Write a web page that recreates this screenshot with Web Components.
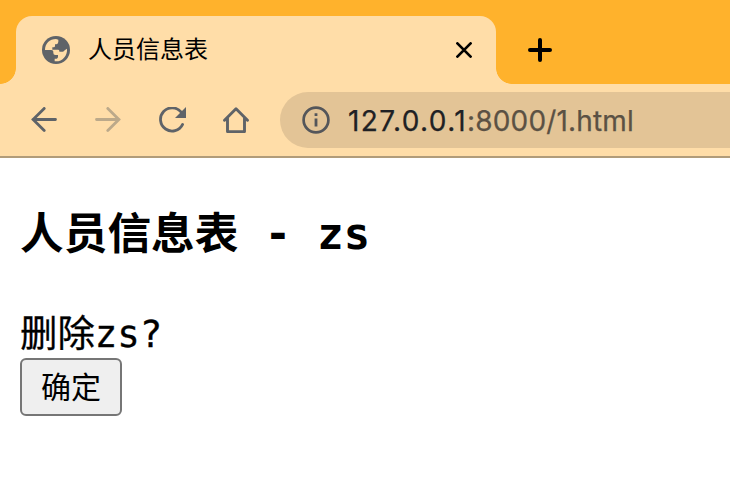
<!DOCTYPE html>
<html lang="zh-CN">
<head>
<meta charset="utf-8">
<title>人员信息表</title>
<style>
html,body{margin:0;height:100%;overflow:hidden;background:#fff}
</style>
</head>
<body>
<browser-window>
  <browser-tab slot="tabs">人员信息表</browser-tab>
  <address-bar slot="address" host="127.0.0.1" path=":8000/1.html"></address-bar>
  <confirm-page heading="人员信息表 - zs" message="删除zs?" action="确定"></confirm-page>
</browser-window>
<script>
const define = (name, html, setup) => customElements.define(name, class extends HTMLElement {
  connectedCallback() {
    if (this.shadowRoot) return;
    const root = this.attachShadow({ mode: 'open' });
    root.innerHTML = html;
    if (setup) setup(this, root);
  }
});

const icons = {
  globe: [28, 28, '0 0 84 84', '<circle cx="42" cy="42" r="42" fill="#5f6368"/><path fill="#ffdda8" d="M9 42C9 23 23 9 42 9L49 11V17Q49 24 43 25H39V30Q39 34 35 34H31V41H48Q52 41 52 45V47H62Q66 47 68 43L75 38C77 58 62 76 42 76H38V68H44Q48 67 48 62V57H40Q34 57 34 51V47Q34 42 28 42Z"/>'],
  back: [26, 26, '0 0 26 26', '<path d="M24.5 12.5H2M13.2 1.4L2.1 12.5L13.2 23.6" fill="none" stroke="#5f6368" stroke-width="2.8" stroke-linecap="round"/>'],
  forward: [26, 26, '0 0 26 26', '<path d="M1.5 12.5H24M12.8 1.4L23.9 12.5L12.8 23.6" fill="none" stroke="#bca98a" stroke-width="2.8" stroke-linecap="round"/>'],
  reload: [28, 26, '0 0 28 26', '<path d="M22.2 5.2A11.6 11.6 0 1 0 23.6 17.4" fill="none" stroke="#5f6368" stroke-width="2.8" stroke-linecap="round"/><path d="M27 0V11H16Z" fill="#5f6368"/>'],
  home: [26, 26, '0 0 26 26', '<path d="M1.5 13.2L13 1.8L24.5 13.2M4.5 11V24.6H21.5V11" fill="none" stroke="#5f6368" stroke-width="2.9" stroke-linejoin="round" stroke-linecap="round"/>'],
  info: [28, 28, '0 0 28 28', '<circle cx="14" cy="14" r="12.4" fill="none" stroke="#54565a" stroke-width="2.7"/><path d="M12.6 7.3H15.4V10H12.6ZM12.6 12.4H15.4V20.6H12.6Z" fill="#54565a"/>'],
  close: [16, 16, '0 0 16 16', '<path d="M1.4 1.4L14.6 14.6M14.6 1.4L1.4 14.6" stroke="#000" stroke-width="2.7" stroke-linecap="round"/>'],
  plus: [24, 24, '0 0 24 24', '<path d="M12 2V22M2 12H22" stroke="#000" stroke-width="4" stroke-linecap="round"/>']
};
define('ui-icon', '<style>:host{display:block;flex:none}svg{display:block}</style>', (el, root) => {
  const [w, h, box, body] = icons[el.getAttribute('name')];
  root.innerHTML += `<svg width="${w}" height="${h}" viewBox="${box}">${body}</svg>`;
});

define('browser-tab', `
<style>
:host{display:flex;position:relative;box-sizing:border-box;width:480px;height:68px;padding:0 24px 0 26px;
  align-items:center;background:#ffdda8;border-radius:16px 16px 0 0;
  font:24px/36px "Noto Sans CJK SC",sans-serif;color:#000}
:host::before,:host::after{content:"";position:absolute;bottom:0;width:16px;height:16px}
:host::before{right:100%;background:radial-gradient(circle at 0 0,transparent 15.5px,#ffdda8 16.2px)}
:host::after{left:100%;background:radial-gradient(circle at 100% 0,transparent 15.5px,#ffdda8 16.2px)}
span{flex:1;padding:0 0 4px 18px}
</style>
<ui-icon name="globe"></ui-icon><span><slot></slot></span><ui-icon name="close"></ui-icon>`);

define('address-bar', `
<style>
:host{display:flex;flex:1;height:56px;align-items:center;box-sizing:border-box;padding-left:22px;gap:18px;
  background:#e3c496;border-radius:28px 0 0 28px;font:28px/40px Inter,sans-serif;white-space:nowrap}
.url{padding-top:1px;color:#202124;-webkit-text-stroke:.25px currentColor}
.host{letter-spacing:1.4px}
.path{letter-spacing:.15px;color:#5b5144}
</style>
<ui-icon name="info"></ui-icon><div class="url"><span class="host"></span><span class="path"></span></div>`,
(el, root) => {
  root.querySelector('.host').textContent = el.getAttribute('host');
  root.querySelector('.path').textContent = el.getAttribute('path');
});

define('confirm-page', `
<style>
:host{display:block;padding:46px 20px 0;color:#000;font-family:"DejaVu Sans Mono","Noto Sans CJK SC",monospace}
h3{margin:0;font-size:43.7px;line-height:60px;font-weight:700;white-space:pre}
p{margin:45px 0 0;font-size:37.4px;line-height:50px;-webkit-text-stroke:.3px #000}
button{display:block;box-sizing:border-box;width:102px;height:58px;margin:-1px 0 0;padding:0 0 4px;border:2px solid #767676;
  border-radius:6px;background:#efefef;color:#000;font:30px/50px "Noto Sans CJK SC",sans-serif}
</style>
<h3></h3><p></p><button></button>`, (el, root) => {
  root.querySelector('h3').textContent = el.getAttribute('heading');
  root.querySelector('p').textContent = el.getAttribute('message');
  root.querySelector('button').textContent = el.getAttribute('action');
});

define('browser-window', `
<style>
:host{display:flex;flex-direction:column;height:478px;background:#fff}
.strip{display:flex;height:84px;box-sizing:border-box;padding:16px 0 0 16px;gap:32px;background:#ffb22c;align-items:center}
.toolbar{display:flex;height:74px;box-sizing:border-box;padding:8px 0 8px 31px;background:#ffdda8;
  border-bottom:2px solid #b19c7a;align-items:center}
.nav{display:flex;width:249px;gap:38px;align-items:center}
.nav ui-icon:nth-child(4){margin-left:-2px}
</style>
<div class="strip"><slot name="tabs"></slot><ui-icon name="plus"></ui-icon></div>
<div class="toolbar"><div class="nav"><ui-icon name="back"></ui-icon><ui-icon name="forward"></ui-icon><ui-icon name="reload"></ui-icon><ui-icon name="home"></ui-icon></div><slot name="address"></slot></div>
<slot></slot>`);
</script>
</body>
</html>
